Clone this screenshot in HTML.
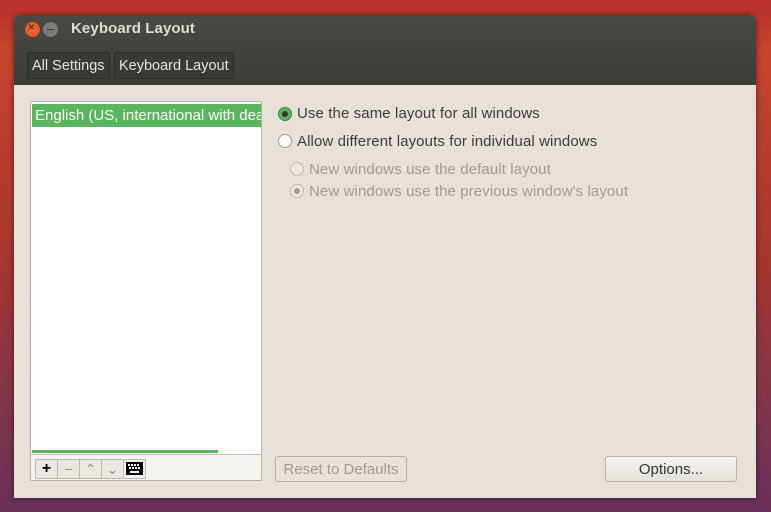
<!DOCTYPE html>
<html><head><style>
body{margin:0;width:771px;height:512px;overflow:hidden;font-family:"Liberation Sans",sans-serif;
background:linear-gradient(180deg,#b8302a 0%,#c9432d 10%,#a8362f 50%,#7a3550 85%,#6a2e58 100%);position:relative}
.win{position:absolute;left:14px;top:15px;width:742px;height:483px;border-radius:6px 6px 0 0;background:#e8e1d9;overflow:hidden;box-shadow:0 0 6px rgba(0,0,0,.5)}
.tb{position:absolute;left:0;top:0;width:742px;height:70px;background:linear-gradient(#4a4944,#3d3c38)}
.title{position:absolute;left:57px;color:#dfdbd2;font-weight:bold;font-size:15px;letter-spacing:.1px;top:5px}
.btn{position:absolute;top:7px;width:15px;height:15px;border-radius:50%}
.crumb{position:absolute;top:37px;height:25px;line-height:26px;color:#e8e4dc;font-size:14.5px;padding:0 4px;background:#3a3935;border:1px solid #2e2d2a}
.list{position:absolute;left:16px;top:86px;width:230px;height:378px;background:#fff;border:1px solid #b8b0a6;border-radius:2px;overflow:hidden}
.sel{position:absolute;left:1px;top:2px;width:229px;height:23px;background:#5ab55f;color:#fff;font-size:15px;line-height:23px;padding-left:3px;white-space:nowrap;overflow:hidden;box-sizing:border-box}
.bar{position:absolute;left:1px;top:348px;width:186px;height:3px;background:#5ab55f}
.tools{position:absolute;left:0;top:352px;width:230px;height:26px;background:#f5f3f0;border-top:1px solid #c8c2ba}
.tbtn{position:absolute;top:4px;width:21px;height:18px;border:1px solid #c0b8ae;background:#ebe6df;font-size:14px;text-align:center;line-height:18px;color:#9a948c}
.r{position:absolute;font-size:15px;color:#3c3c3c;letter-spacing:.1px}
.rad{position:absolute;width:12px;height:12px;border-radius:50%;border:1px solid #a09890;background:#fff}
.dis{color:#a09a92}
.pb{position:absolute;top:441px;height:24px;border:1px solid #b8b0a6;border-radius:3px;font-size:15px;text-align:center;line-height:26px}
</style></head><body>
<div class="win">
<div class="tb">
<div class="btn" style="left:11px;background:radial-gradient(#f26d3d,#d94a1e)"><span style="position:absolute;left:3px;top:-2px;font-size:12px;color:#4a2010">×</span></div>
<div class="btn" style="left:29px;background:#7c7a74"><span style="position:absolute;left:4px;top:7px;width:7px;height:1px;background:#3a3935"></span></div>
<div class="title">Keyboard Layout</div>
<div class="crumb" style="left:13px">All Settings</div>
<div class="crumb" style="left:100px">Keyboard Layout</div>
</div>
<div class="list">
<div class="sel">English (US, international with dead keys)</div>
<div class="bar"></div>
<div class="tools">
<div class="tbtn" style="left:4px;color:#000;font-weight:bold;font-size:16px">+</div>
<div class="tbtn" style="left:26px">−</div>
<div class="tbtn" style="left:48px">⌃</div>
<div class="tbtn" style="left:70px">⌄</div>
<div class="tbtn" style="left:92px;background:#f5f3f0"><svg width="17" height="13" style="margin-top:2px" viewBox="0 0 17 13"><rect x="0" y="0" width="17" height="13" fill="#000"/><g fill="#fff"><rect x="2" y="2" width="2" height="2"/><rect x="5" y="2" width="2" height="2"/><rect x="8" y="2" width="2" height="2"/><rect x="11" y="2" width="2" height="2"/><rect x="3" y="5" width="2" height="2"/><rect x="6" y="5" width="2" height="2"/><rect x="9" y="5" width="2" height="2"/><rect x="12" y="5" width="2" height="2"/><rect x="4" y="9" width="9" height="2"/></g></svg></div>
</div>
</div>
<div class="rad" style="left:264px;top:92px;background:#5ab55f;border-color:#3d8a41"><span style="position:absolute;left:3px;top:3px;width:6px;height:6px;border-radius:50%;background:#2b3a2b"></span></div>
<div class="r" style="left:283px;top:90px">Use the same layout for all windows</div>
<div class="rad" style="left:264px;top:119px"></div>
<div class="r" style="left:283px;top:118px">Allow different layouts for individual windows</div>
<div class="rad" style="left:276px;top:147px;background:#ece7e0;border-color:#c5beb5"></div>
<div class="r dis" style="left:295px;top:146px">New windows use the default layout</div>
<div class="rad" style="left:276px;top:169px;background:#ece7e0;border-color:#c5beb5"><span style="position:absolute;left:3px;top:3px;width:6px;height:6px;border-radius:50%;background:#a8a096"></span></div>
<div class="r dis" style="left:295px;top:168px">New windows use the previous window's layout</div>
<div class="pb dis" style="left:261px;width:130px;background:#e8e2da">Reset to Defaults</div>
<div class="pb" style="left:591px;width:130px;color:#333;background:linear-gradient(#f6f4f1,#e6e1da)">Options...</div>
</div>
</body></html>
